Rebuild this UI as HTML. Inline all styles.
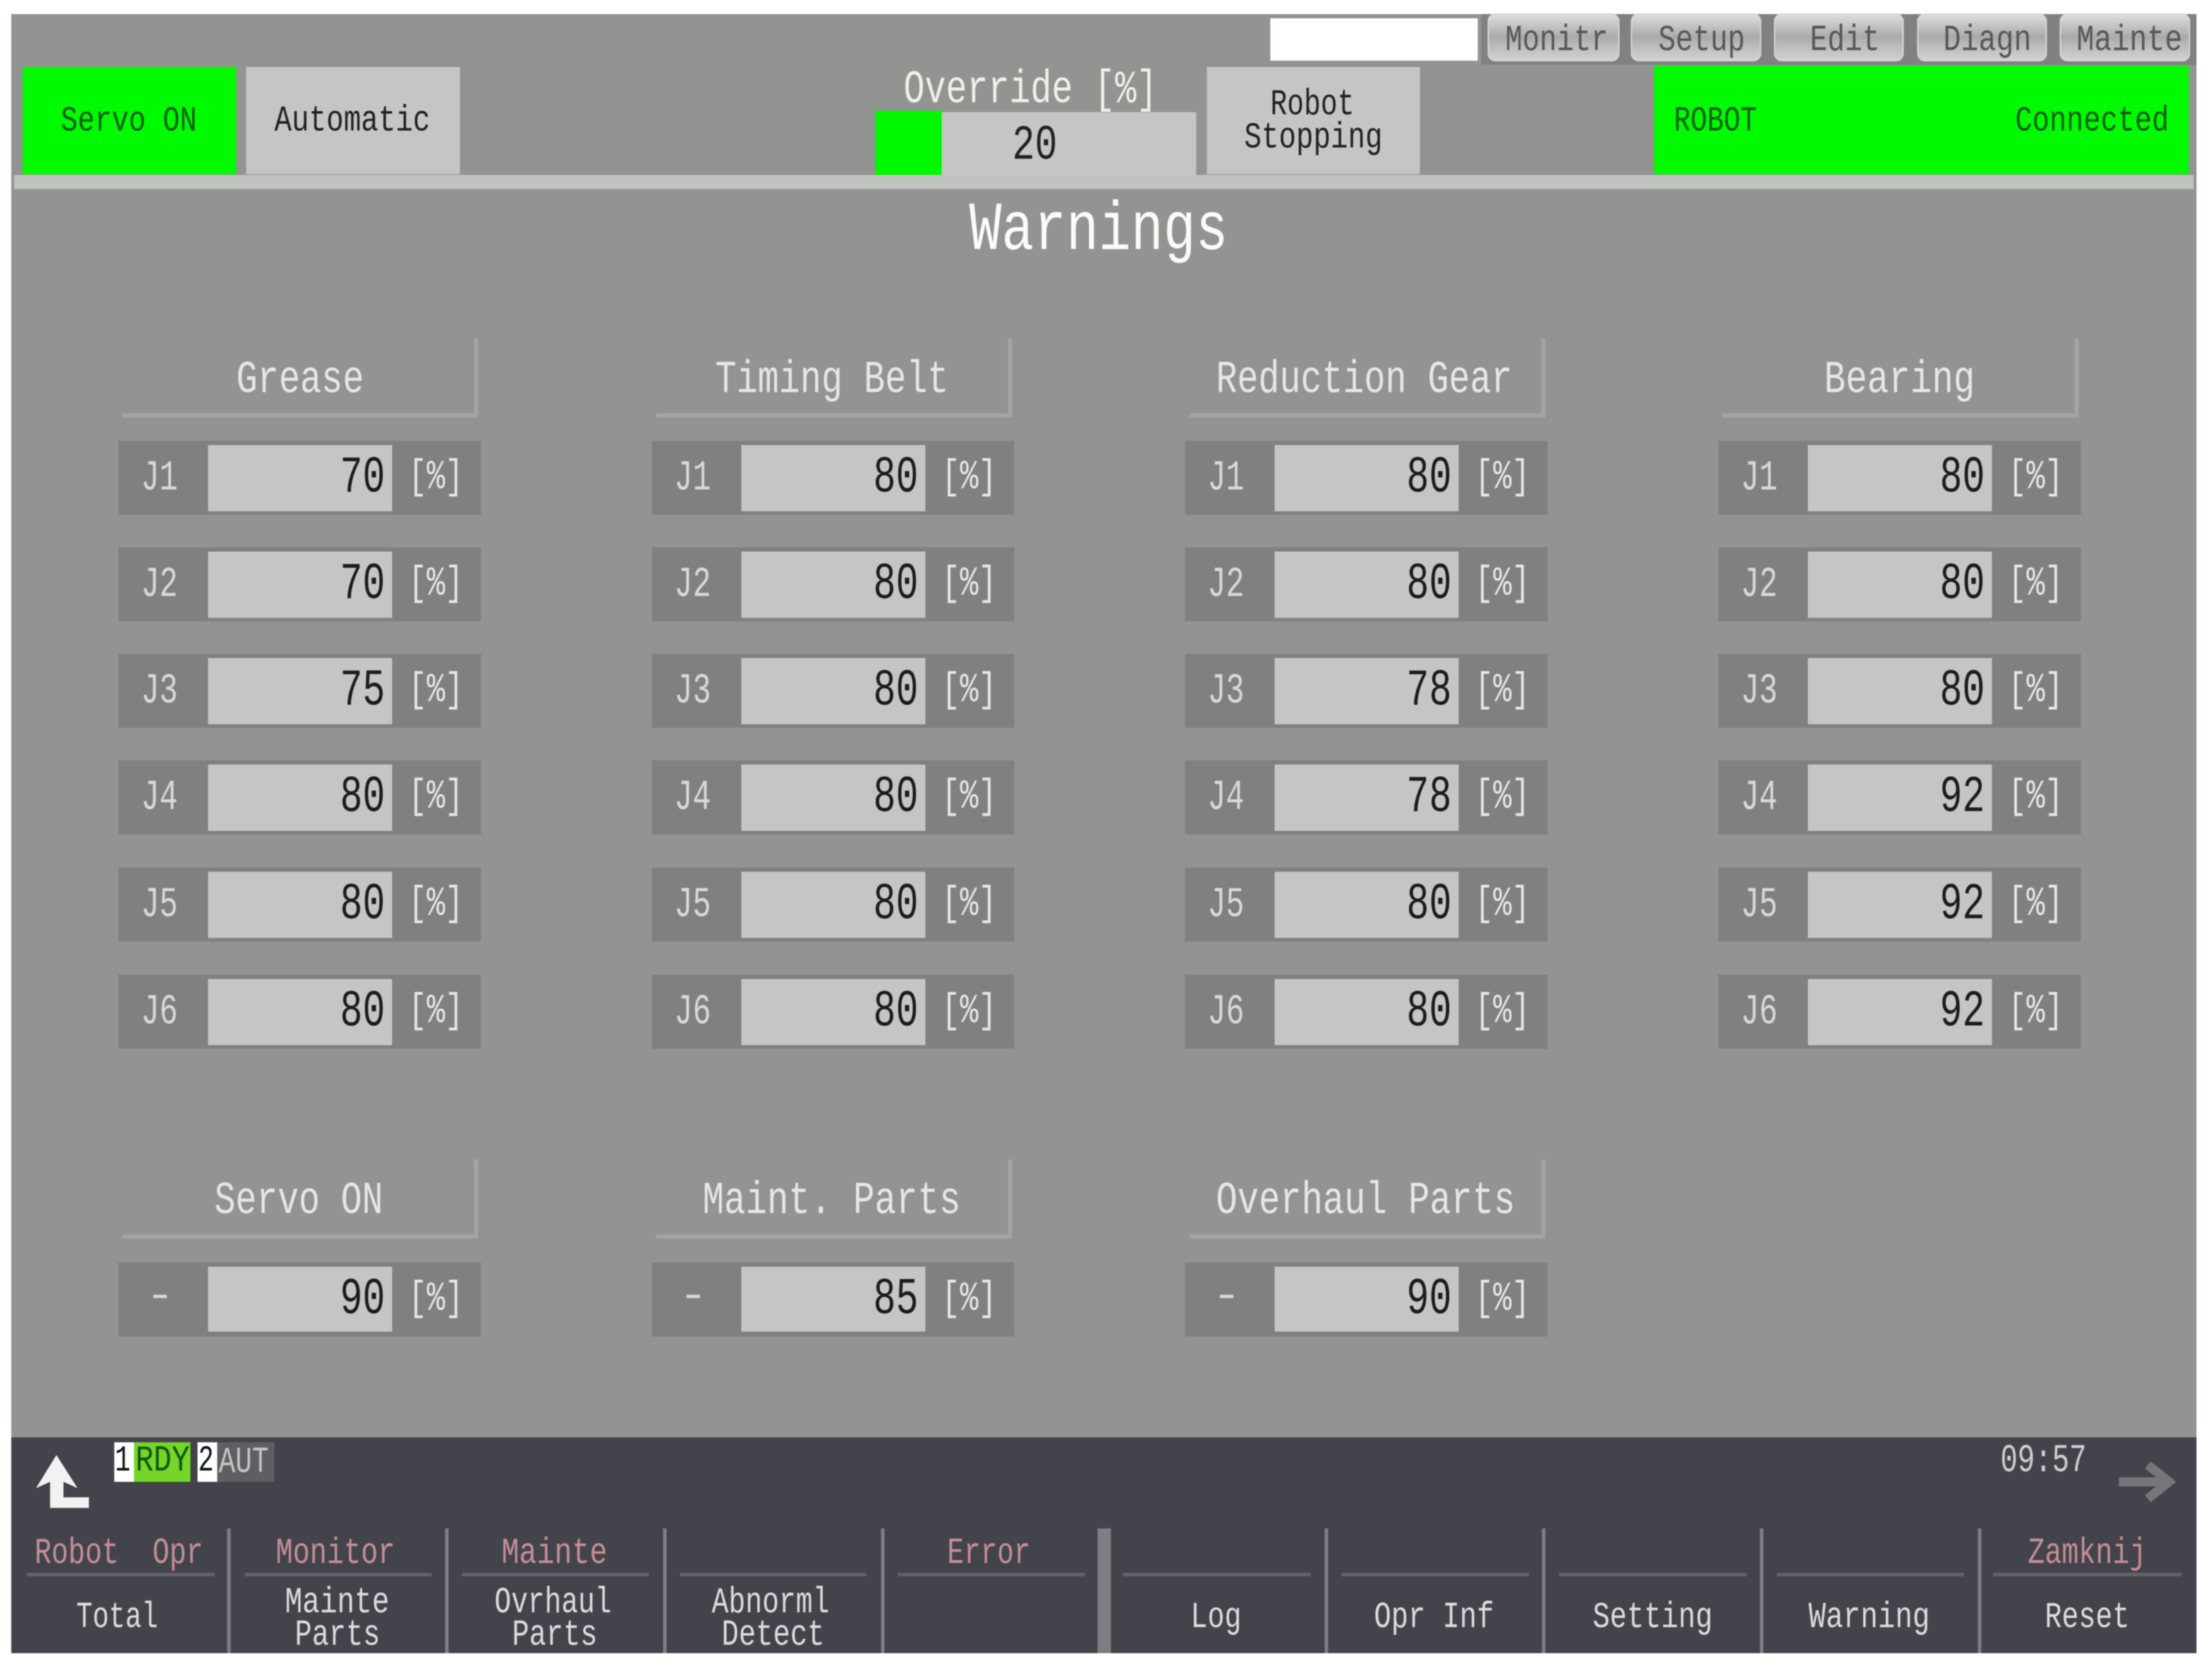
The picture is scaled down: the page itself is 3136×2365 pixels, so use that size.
<!DOCTYPE html>
<html><head><meta charset="utf-8"><title>Warnings</title>
<style>
html,body{margin:0;padding:0;background:#fff;width:3136px;height:2365px;overflow:hidden}
svg{display:block;filter:blur(.7px)}
text{font-family:"Liberation Mono","DejaVu Sans Mono",monospace;white-space:pre}
.s{fill:#7f817e}.i{fill:#c5c5c4}.b{fill:#a3a5a2}
.j{font-size:60px;fill:#d8d9d7}
.v{font-size:73px;fill:#1c1c1c}
.p{font-size:58px;fill:#e6e7e5}
.h{font-size:65px;fill:#e6e7e5}
.m{font-size:52px;fill:#222}
.g{font-size:50px;fill:#0a6010}
.tab{font-size:52px;fill:#55585a}
.r{font-size:52px;fill:#c28f96}
.w{font-size:52px;fill:#dcdcdc}
.sep{fill:#7e7e83}.hl{fill:#626368}
.tb{stroke:#d6d6d6;stroke-width:2}
</style></head><body>
<svg width="3136" height="2365" viewBox="0 0 3136 2365" xmlns="http://www.w3.org/2000/svg">
<defs><linearGradient id="tg" x1="0" y1="0" x2="0" y2="1"><stop offset="0" stop-color="#dedede"/><stop offset=".5" stop-color="#a9a9a9"/><stop offset=".62" stop-color="#b6b6b6"/><stop offset="1" stop-color="#d2d2d2"/></linearGradient></defs>
<rect width="3136" height="2365" fill="#fff"/>
<rect x="16" y="20" width="3098" height="2018" fill="#929491"/>
<rect x="20" y="248" width="3090" height="20" fill="#c1c3c0"/>
<rect x="2100" y="20" width="1014" height="72" fill="#808182"/>
<rect x="1801" y="26" width="294" height="60" fill="#fff"/>
<rect class="tb" x="2110" y="20" width="185" height="66" rx="10" fill="url(#tg)"/>
<rect class="tb" x="2313" y="20" width="183" height="66" rx="10" fill="url(#tg)"/>
<rect class="tb" x="2516" y="20" width="182" height="66" rx="10" fill="url(#tg)"/>
<rect class="tb" x="2719" y="20" width="182" height="66" rx="10" fill="url(#tg)"/>
<rect class="tb" x="2921" y="20" width="183" height="66" rx="10" fill="url(#tg)"/>
<text class="tab" x="2134" y="71" textLength="146" lengthAdjust="spacingAndGlyphs">Monitr</text>
<text class="tab" x="2351" y="71" textLength="123" lengthAdjust="spacingAndGlyphs">Setup</text>
<text class="tab" x="2566" y="71" textLength="99" lengthAdjust="spacingAndGlyphs">Edit</text>
<text class="tab" x="2755" y="71" textLength="125" lengthAdjust="spacingAndGlyphs">Diagn</text>
<text class="tab" x="2944" y="71" textLength="150" lengthAdjust="spacingAndGlyphs">Mainte</text>

<rect x="32" y="95" width="303" height="152" fill="#00fb00"/>
<text class="g" x="86" y="185" textLength="193" lengthAdjust="spacingAndGlyphs">Servo ON</text>
<rect x="349" y="95" width="303" height="152" fill="#c5c5c4"/>
<text class="m" x="389" y="185" textLength="221" lengthAdjust="spacingAndGlyphs">Automatic</text>

<text x="1281" y="145" style="font-size:66px;fill:#f0efe8" textLength="360" lengthAdjust="spacingAndGlyphs">Override [%]</text>
<rect x="1241" y="157" width="94" height="91" fill="#00f800"/>
<rect x="1335" y="159" width="361" height="89" fill="#c5c5c4"/>
<text x="1435" y="225" style="font-size:70px;fill:#222" textLength="64" lengthAdjust="spacingAndGlyphs">20</text>
<rect x="1711" y="95" width="302" height="152" fill="#c5c5c4"/>
<text class="m" x="1801" y="162" textLength="119" lengthAdjust="spacingAndGlyphs">Robot</text>
<text class="m" x="1764" y="209" textLength="196" lengthAdjust="spacingAndGlyphs">Stopping</text>
<rect x="2345" y="93" width="758" height="154" fill="#00fb00"/>
<text class="g" x="2373" y="185" textLength="118" lengthAdjust="spacingAndGlyphs">ROBOT</text>
<text class="g" x="2857" y="185" textLength="218" lengthAdjust="spacingAndGlyphs">Connected</text>

<text x="1374" y="353" style="font-size:97px;fill:#fbfbf8" textLength="367" lengthAdjust="spacingAndGlyphs">Warnings</text>

<g transform="translate(168,480)"><rect class="b" x="504" width="6" height="112"/><rect class="b" x="5" y="106" width="505" height="6"/><text class="h" x="167" y="76" textLength="181" lengthAdjust="spacingAndGlyphs">Grease</text></g>
<g transform="translate(925,480)"><rect class="b" x="504" width="6" height="112"/><rect class="b" x="5" y="106" width="505" height="6"/><text class="h" x="89" y="76" textLength="331" lengthAdjust="spacingAndGlyphs">Timing Belt</text></g>
<g transform="translate(1681,480)"><rect class="b" x="504" width="6" height="112"/><rect class="b" x="5" y="106" width="505" height="6"/><text class="h" x="43" y="76" textLength="420" lengthAdjust="spacingAndGlyphs">Reduction Gear</text></g>
<g transform="translate(2437,480)"><rect class="b" x="504" width="6" height="112"/><rect class="b" x="5" y="106" width="505" height="6"/><text class="h" x="149" y="76" textLength="214" lengthAdjust="spacingAndGlyphs">Bearing</text></g>

<g transform="translate(168,625)"><rect class="s" width="514" height="105"/><rect class="i" x="127" y="6" width="261" height="94"/><text class="j" x="32" y="69" textLength="52" lengthAdjust="spacingAndGlyphs">J1</text><text class="v" x="314" y="72" textLength="64" lengthAdjust="spacingAndGlyphs">70</text><text class="p" x="411" y="67" textLength="78" lengthAdjust="spacingAndGlyphs">[%]</text></g>
<g transform="translate(168,776)"><rect class="s" width="514" height="105"/><rect class="i" x="127" y="6" width="261" height="94"/><text class="j" x="32" y="69" textLength="52" lengthAdjust="spacingAndGlyphs">J2</text><text class="v" x="314" y="72" textLength="64" lengthAdjust="spacingAndGlyphs">70</text><text class="p" x="411" y="67" textLength="78" lengthAdjust="spacingAndGlyphs">[%]</text></g>
<g transform="translate(168,927)"><rect class="s" width="514" height="105"/><rect class="i" x="127" y="6" width="261" height="94"/><text class="j" x="32" y="69" textLength="52" lengthAdjust="spacingAndGlyphs">J3</text><text class="v" x="314" y="72" textLength="64" lengthAdjust="spacingAndGlyphs">75</text><text class="p" x="411" y="67" textLength="78" lengthAdjust="spacingAndGlyphs">[%]</text></g>
<g transform="translate(168,1078)"><rect class="s" width="514" height="105"/><rect class="i" x="127" y="6" width="261" height="94"/><text class="j" x="32" y="69" textLength="52" lengthAdjust="spacingAndGlyphs">J4</text><text class="v" x="314" y="72" textLength="64" lengthAdjust="spacingAndGlyphs">80</text><text class="p" x="411" y="67" textLength="78" lengthAdjust="spacingAndGlyphs">[%]</text></g>
<g transform="translate(168,1230)"><rect class="s" width="514" height="105"/><rect class="i" x="127" y="6" width="261" height="94"/><text class="j" x="32" y="69" textLength="52" lengthAdjust="spacingAndGlyphs">J5</text><text class="v" x="314" y="72" textLength="64" lengthAdjust="spacingAndGlyphs">80</text><text class="p" x="411" y="67" textLength="78" lengthAdjust="spacingAndGlyphs">[%]</text></g>
<g transform="translate(168,1382)"><rect class="s" width="514" height="105"/><rect class="i" x="127" y="6" width="261" height="94"/><text class="j" x="32" y="69" textLength="52" lengthAdjust="spacingAndGlyphs">J6</text><text class="v" x="314" y="72" textLength="64" lengthAdjust="spacingAndGlyphs">80</text><text class="p" x="411" y="67" textLength="78" lengthAdjust="spacingAndGlyphs">[%]</text></g>

<g transform="translate(924,625)"><rect class="s" width="514" height="105"/><rect class="i" x="127" y="6" width="261" height="94"/><text class="j" x="32" y="69" textLength="52" lengthAdjust="spacingAndGlyphs">J1</text><text class="v" x="314" y="72" textLength="64" lengthAdjust="spacingAndGlyphs">80</text><text class="p" x="411" y="67" textLength="78" lengthAdjust="spacingAndGlyphs">[%]</text></g>
<g transform="translate(924,776)"><rect class="s" width="514" height="105"/><rect class="i" x="127" y="6" width="261" height="94"/><text class="j" x="32" y="69" textLength="52" lengthAdjust="spacingAndGlyphs">J2</text><text class="v" x="314" y="72" textLength="64" lengthAdjust="spacingAndGlyphs">80</text><text class="p" x="411" y="67" textLength="78" lengthAdjust="spacingAndGlyphs">[%]</text></g>
<g transform="translate(924,927)"><rect class="s" width="514" height="105"/><rect class="i" x="127" y="6" width="261" height="94"/><text class="j" x="32" y="69" textLength="52" lengthAdjust="spacingAndGlyphs">J3</text><text class="v" x="314" y="72" textLength="64" lengthAdjust="spacingAndGlyphs">80</text><text class="p" x="411" y="67" textLength="78" lengthAdjust="spacingAndGlyphs">[%]</text></g>
<g transform="translate(924,1078)"><rect class="s" width="514" height="105"/><rect class="i" x="127" y="6" width="261" height="94"/><text class="j" x="32" y="69" textLength="52" lengthAdjust="spacingAndGlyphs">J4</text><text class="v" x="314" y="72" textLength="64" lengthAdjust="spacingAndGlyphs">80</text><text class="p" x="411" y="67" textLength="78" lengthAdjust="spacingAndGlyphs">[%]</text></g>
<g transform="translate(924,1230)"><rect class="s" width="514" height="105"/><rect class="i" x="127" y="6" width="261" height="94"/><text class="j" x="32" y="69" textLength="52" lengthAdjust="spacingAndGlyphs">J5</text><text class="v" x="314" y="72" textLength="64" lengthAdjust="spacingAndGlyphs">80</text><text class="p" x="411" y="67" textLength="78" lengthAdjust="spacingAndGlyphs">[%]</text></g>
<g transform="translate(924,1382)"><rect class="s" width="514" height="105"/><rect class="i" x="127" y="6" width="261" height="94"/><text class="j" x="32" y="69" textLength="52" lengthAdjust="spacingAndGlyphs">J6</text><text class="v" x="314" y="72" textLength="64" lengthAdjust="spacingAndGlyphs">80</text><text class="p" x="411" y="67" textLength="78" lengthAdjust="spacingAndGlyphs">[%]</text></g>

<g transform="translate(1680,625)"><rect class="s" width="514" height="105"/><rect class="i" x="127" y="6" width="261" height="94"/><text class="j" x="32" y="69" textLength="52" lengthAdjust="spacingAndGlyphs">J1</text><text class="v" x="314" y="72" textLength="64" lengthAdjust="spacingAndGlyphs">80</text><text class="p" x="411" y="67" textLength="78" lengthAdjust="spacingAndGlyphs">[%]</text></g>
<g transform="translate(1680,776)"><rect class="s" width="514" height="105"/><rect class="i" x="127" y="6" width="261" height="94"/><text class="j" x="32" y="69" textLength="52" lengthAdjust="spacingAndGlyphs">J2</text><text class="v" x="314" y="72" textLength="64" lengthAdjust="spacingAndGlyphs">80</text><text class="p" x="411" y="67" textLength="78" lengthAdjust="spacingAndGlyphs">[%]</text></g>
<g transform="translate(1680,927)"><rect class="s" width="514" height="105"/><rect class="i" x="127" y="6" width="261" height="94"/><text class="j" x="32" y="69" textLength="52" lengthAdjust="spacingAndGlyphs">J3</text><text class="v" x="314" y="72" textLength="64" lengthAdjust="spacingAndGlyphs">78</text><text class="p" x="411" y="67" textLength="78" lengthAdjust="spacingAndGlyphs">[%]</text></g>
<g transform="translate(1680,1078)"><rect class="s" width="514" height="105"/><rect class="i" x="127" y="6" width="261" height="94"/><text class="j" x="32" y="69" textLength="52" lengthAdjust="spacingAndGlyphs">J4</text><text class="v" x="314" y="72" textLength="64" lengthAdjust="spacingAndGlyphs">78</text><text class="p" x="411" y="67" textLength="78" lengthAdjust="spacingAndGlyphs">[%]</text></g>
<g transform="translate(1680,1230)"><rect class="s" width="514" height="105"/><rect class="i" x="127" y="6" width="261" height="94"/><text class="j" x="32" y="69" textLength="52" lengthAdjust="spacingAndGlyphs">J5</text><text class="v" x="314" y="72" textLength="64" lengthAdjust="spacingAndGlyphs">80</text><text class="p" x="411" y="67" textLength="78" lengthAdjust="spacingAndGlyphs">[%]</text></g>
<g transform="translate(1680,1382)"><rect class="s" width="514" height="105"/><rect class="i" x="127" y="6" width="261" height="94"/><text class="j" x="32" y="69" textLength="52" lengthAdjust="spacingAndGlyphs">J6</text><text class="v" x="314" y="72" textLength="64" lengthAdjust="spacingAndGlyphs">80</text><text class="p" x="411" y="67" textLength="78" lengthAdjust="spacingAndGlyphs">[%]</text></g>

<g transform="translate(2436,625)"><rect class="s" width="514" height="105"/><rect class="i" x="127" y="6" width="261" height="94"/><text class="j" x="32" y="69" textLength="52" lengthAdjust="spacingAndGlyphs">J1</text><text class="v" x="314" y="72" textLength="64" lengthAdjust="spacingAndGlyphs">80</text><text class="p" x="411" y="67" textLength="78" lengthAdjust="spacingAndGlyphs">[%]</text></g>
<g transform="translate(2436,776)"><rect class="s" width="514" height="105"/><rect class="i" x="127" y="6" width="261" height="94"/><text class="j" x="32" y="69" textLength="52" lengthAdjust="spacingAndGlyphs">J2</text><text class="v" x="314" y="72" textLength="64" lengthAdjust="spacingAndGlyphs">80</text><text class="p" x="411" y="67" textLength="78" lengthAdjust="spacingAndGlyphs">[%]</text></g>
<g transform="translate(2436,927)"><rect class="s" width="514" height="105"/><rect class="i" x="127" y="6" width="261" height="94"/><text class="j" x="32" y="69" textLength="52" lengthAdjust="spacingAndGlyphs">J3</text><text class="v" x="314" y="72" textLength="64" lengthAdjust="spacingAndGlyphs">80</text><text class="p" x="411" y="67" textLength="78" lengthAdjust="spacingAndGlyphs">[%]</text></g>
<g transform="translate(2436,1078)"><rect class="s" width="514" height="105"/><rect class="i" x="127" y="6" width="261" height="94"/><text class="j" x="32" y="69" textLength="52" lengthAdjust="spacingAndGlyphs">J4</text><text class="v" x="314" y="72" textLength="64" lengthAdjust="spacingAndGlyphs">92</text><text class="p" x="411" y="67" textLength="78" lengthAdjust="spacingAndGlyphs">[%]</text></g>
<g transform="translate(2436,1230)"><rect class="s" width="514" height="105"/><rect class="i" x="127" y="6" width="261" height="94"/><text class="j" x="32" y="69" textLength="52" lengthAdjust="spacingAndGlyphs">J5</text><text class="v" x="314" y="72" textLength="64" lengthAdjust="spacingAndGlyphs">92</text><text class="p" x="411" y="67" textLength="78" lengthAdjust="spacingAndGlyphs">[%]</text></g>
<g transform="translate(2436,1382)"><rect class="s" width="514" height="105"/><rect class="i" x="127" y="6" width="261" height="94"/><text class="j" x="32" y="69" textLength="52" lengthAdjust="spacingAndGlyphs">J6</text><text class="v" x="314" y="72" textLength="64" lengthAdjust="spacingAndGlyphs">92</text><text class="p" x="411" y="67" textLength="78" lengthAdjust="spacingAndGlyphs">[%]</text></g>

<g transform="translate(168,1644)"><rect class="b" x="504" width="6" height="112"/><rect class="b" x="5" y="106" width="505" height="6"/><text class="h" x="136" y="76" textLength="239" lengthAdjust="spacingAndGlyphs">Servo ON</text></g>
<g transform="translate(925,1644)"><rect class="b" x="504" width="6" height="112"/><rect class="b" x="5" y="106" width="505" height="6"/><text class="h" x="71" y="76" textLength="366" lengthAdjust="spacingAndGlyphs">Maint. Parts</text></g>
<g transform="translate(1681,1644)"><rect class="b" x="504" width="6" height="112"/><rect class="b" x="5" y="106" width="505" height="6"/><text class="h" x="43" y="76" textLength="424" lengthAdjust="spacingAndGlyphs">Overhaul Parts</text></g>

<g transform="translate(168,1790)"><rect class="s" width="514" height="105"/><rect class="i" x="127" y="6" width="261" height="92"/><text class="j" x="38" y="64" textLength="42" lengthAdjust="spacingAndGlyphs">-</text><text class="v" x="314" y="72" textLength="64" lengthAdjust="spacingAndGlyphs">90</text><text class="p" x="411" y="67" textLength="78" lengthAdjust="spacingAndGlyphs">[%]</text></g>
<g transform="translate(924,1790)"><rect class="s" width="514" height="105"/><rect class="i" x="127" y="6" width="261" height="92"/><text class="j" x="38" y="64" textLength="42" lengthAdjust="spacingAndGlyphs">-</text><text class="v" x="314" y="72" textLength="64" lengthAdjust="spacingAndGlyphs">85</text><text class="p" x="411" y="67" textLength="78" lengthAdjust="spacingAndGlyphs">[%]</text></g>
<g transform="translate(1680,1790)"><rect class="s" width="514" height="105"/><rect class="i" x="127" y="6" width="261" height="92"/><text class="j" x="38" y="64" textLength="42" lengthAdjust="spacingAndGlyphs">-</text><text class="v" x="314" y="72" textLength="64" lengthAdjust="spacingAndGlyphs">90</text><text class="p" x="411" y="67" textLength="78" lengthAdjust="spacingAndGlyphs">[%]</text></g>

<rect x="16" y="2038" width="3098" height="306" fill="#43434b"/>
<path d="M80 2063L110 2110L90 2101V2123H126V2138H71V2101L51 2110Z" fill="#f2f2f2"/>
<rect x="162" y="2045" width="28" height="56" fill="#fff"/>
<rect x="190" y="2045" width="80" height="56" fill="#76d42a"/>
<rect x="280" y="2045" width="28" height="56" fill="#fff"/>
<rect x="308" y="2045" width="81" height="56" fill="#5f5f63"/>
<text x="163" y="2085" style="font-size:52px;fill:#111" textLength="22" lengthAdjust="spacingAndGlyphs">1</text>
<text x="192" y="2085" style="font-size:52px;fill:#0f5a10" textLength="77" lengthAdjust="spacingAndGlyphs">RDY</text>
<text x="281" y="2085" style="font-size:52px;fill:#111" textLength="22" lengthAdjust="spacingAndGlyphs">2</text>
<text x="310" y="2087" style="font-size:52px;fill:#c4c4c4" textLength="71" lengthAdjust="spacingAndGlyphs">AUT</text>
<text x="2836" y="2086" style="font-size:56px;fill:#cfcfcf" textLength="122" lengthAdjust="spacingAndGlyphs">09:57</text>
<path d="M3004 2101H3072M3045 2077L3075 2101L3045 2125" fill="none" stroke="#75767a" stroke-width="13"/>

<rect class="sep" x="322" y="2167" width="5" height="177"/>
<rect class="sep" x="631" y="2167" width="5" height="177"/>
<rect class="sep" x="940" y="2167" width="5" height="177"/>
<rect class="sep" x="1249" y="2167" width="5" height="177"/>
<rect class="sep" x="1556" y="2167" width="19" height="177"/>
<rect class="sep" x="1878" y="2167" width="5" height="177"/>
<rect class="sep" x="2186" y="2167" width="5" height="177"/>
<rect class="sep" x="2495" y="2167" width="5" height="177"/>
<rect class="sep" x="2804" y="2167" width="5" height="177"/>

<rect class="hl" x="38" y="2230" width="266" height="5"/>
<rect class="hl" x="347" y="2230" width="265" height="5"/>
<rect class="hl" x="655" y="2230" width="265" height="5"/>
<rect class="hl" x="964" y="2230" width="264" height="5"/>
<rect class="hl" x="1273" y="2230" width="265" height="5"/>
<rect class="hl" x="1592" y="2230" width="266" height="5"/>
<rect class="hl" x="1902" y="2230" width="266" height="5"/>
<rect class="hl" x="2210" y="2230" width="266" height="5"/>
<rect class="hl" x="2519" y="2230" width="265" height="5"/>
<rect class="hl" x="2826" y="2230" width="267" height="5"/>

<text class="r" x="49" y="2216" textLength="239" lengthAdjust="spacingAndGlyphs">Robot  Opr</text>
<text class="r" x="391" y="2216" textLength="169" lengthAdjust="spacingAndGlyphs">Monitor</text>
<text class="r" x="711" y="2216" textLength="150" lengthAdjust="spacingAndGlyphs">Mainte</text>
<text class="r" x="1343" y="2216" textLength="118" lengthAdjust="spacingAndGlyphs">Error</text>
<text class="r" x="2875" y="2216" textLength="168" lengthAdjust="spacingAndGlyphs">Zamknij</text>

<text class="w" x="108" y="2307" textLength="116" lengthAdjust="spacingAndGlyphs">Total</text>
<text class="w" x="404" y="2286" textLength="148" lengthAdjust="spacingAndGlyphs">Mainte</text>
<text class="w" x="418" y="2332" textLength="121" lengthAdjust="spacingAndGlyphs">Parts</text>
<text class="w" x="701" y="2286" textLength="166" lengthAdjust="spacingAndGlyphs">Ovrhaul</text>
<text class="w" x="726" y="2332" textLength="121" lengthAdjust="spacingAndGlyphs">Parts</text>
<text class="w" x="1009" y="2286" textLength="167" lengthAdjust="spacingAndGlyphs">Abnorml</text>
<text class="w" x="1023" y="2332" textLength="146" lengthAdjust="spacingAndGlyphs">Detect</text>
<text class="w" x="1688" y="2307" textLength="72" lengthAdjust="spacingAndGlyphs">Log</text>
<text class="w" x="1948" y="2307" textLength="170" lengthAdjust="spacingAndGlyphs">Opr Inf</text>
<text class="w" x="2258" y="2307" textLength="170" lengthAdjust="spacingAndGlyphs">Setting</text>
<text class="w" x="2564" y="2307" textLength="172" lengthAdjust="spacingAndGlyphs">Warning</text>
<text class="w" x="2899" y="2307" textLength="120" lengthAdjust="spacingAndGlyphs">Reset</text>
</svg>
</body></html>
